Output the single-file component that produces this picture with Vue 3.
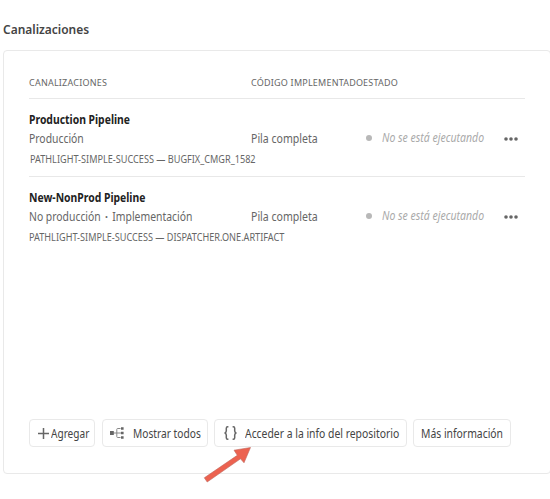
<script setup>
const pipelines = [
  {
    name: 'Production Pipeline',
    type: ['Producción'],
    source: 'PATHLIGHT-SIMPLE-SUCCESS — BUGFIX_CMGR_1582',
    code: 'Pila completa',
    status: 'No se está ejecutando',
    key: 'production',
  },
  {
    name: 'New-NonProd Pipeline',
    type: ['No producción', 'Implementación'],
    source: 'PATHLIGHT-SIMPLE-SUCCESS — DISPATCHER.ONE.ARTIFACT',
    code: 'Pila completa',
    status: 'No se está ejecutando',
    key: 'nonprod',
  },
]
</script>

<template>
  <main class="page">
    <h1 class="title">Canalizaciones</h1>
    <section class="card">
      <div class="head">
        <span class="head-name">Canalizaciones</span>
        <span class="head-code">Código implementado</span>
        <span class="head-status">Estado</span>
      </div>
      <article v-for="p in pipelines" :key="p.key" class="row" :class="p.key">
        <div class="info">
          <h2 class="name">{{ p.name }}</h2>
          <p class="type"><template v-for="(t, i) in p.type" :key="t"><b v-if="i" class="sep">·</b>{{ t }}</template></p>
          <p class="source">{{ p.source }}</p>
        </div>
        <span class="code">{{ p.code }}</span>
        <div class="status"><i class="dot"></i><em>{{ p.status }}</em></div>
        <svg class="more" width="14" height="4" viewBox="0 0 14 4">
          <circle cx="2" cy="2" r="1.8" /><circle cx="7" cy="2" r="1.8" /><circle cx="12" cy="2" r="1.8" />
        </svg>
      </article>
      <footer class="actions">
        <button class="btn add">
          <svg width="11" height="11" viewBox="0 0 11 11"><path d="M5.5 0v11M0 5.5h11" stroke="#666" stroke-width="1.5" /></svg>
          <span>Agregar</span>
        </button>
        <button class="btn all">
          <svg width="15" height="12" viewBox="0 0 15 12">
            <path d="M3 6h8M10.5 1.5H7.6Q6.8 1.5 6.8 2.3V9.7Q6.8 10.5 7.6 10.5H10.5" fill="none" stroke="#888" />
            <path d="M0 4h3.8v4H0zM11 .2h2.6v2.6H11zM11 4.7h2.6v2.6H11zM11 9.2h2.6v2.6H11z" fill="#666" />
          </svg>
          <span>Mostrar todos</span>
        </button>
        <button class="btn repo">
          <svg width="13" height="14" viewBox="0 0 13 14">
            <path d="M4.4.8H3.7Q2.3.8 2.3 2.3V5Q2.3 6.7.6 7 2.3 7.3 2.3 9v2.7q0 1.5 1.4 1.5h.7M8.6.8h.7q1.4 0 1.4 1.5V5q0 1.7 1.7 2-1.7.3-1.7 2v2.7q0 1.5-1.4 1.5h-.7" fill="none" stroke="#666" stroke-width="1.5" />
          </svg>
          <span>Acceder a la info del repositorio</span>
        </button>
        <button class="btn info-btn"><span>Más información</span></button>
      </footer>
    </section>
    <svg class="arrow" width="50" height="38" viewBox="0 0 50 38">
      <path d="M1.3 31.8 34.3 9.3 31 4.2 47.5 1.5 41 16.8 37.5 12.8 4.2 36Z" fill="#ec6250" stroke="#bd685e" stroke-width=".6" />
    </svg>
  </main>
</template>

<style>
body {
  background: #fff;
}
</style>

<style scoped>
.page {
  position: relative;
  box-sizing: border-box;
  width: 550px;
  height: 499px;
  padding: 20px 0 0 3px;
  overflow: hidden;
  font-family: "Noto Sans", "Open Sans", sans-serif;
  color: #666;
  white-space: nowrap;
}
/* Narrowed letterforms */
.title,
.name,
.type,
.source,
.code,
.status em,
.btn span {
  display: block;
  width: max-content;
  transform: scaleX(0.865);
  transform-origin: 0 50%;
}
.title {
  margin: 0;
  height: 18px;
  line-height: 18px;
  font-size: 13px;
  font-weight: 600;
  color: #444;
  transform: scaleX(0.92);
}
.card {
  box-sizing: border-box;
  width: 548px;
  height: 424px;
  margin-top: 12px;
  padding: 24px 25px 0;
  border: 1px solid #e9e9e9;
  border-radius: 4px;
  display: flex;
  flex-direction: column;
}
.head {
  box-sizing: border-box;
  height: 24px;
  width: 496px;
  padding-top: 1px;
  display: flex;
  border-bottom: 1px solid #e8e8e8;
  font-size: 9px;
  line-height: 14px;
  text-transform: uppercase;
  letter-spacing: 0.22px;
}
.head-name {
  width: 222px;
}
.head-code {
  width: 112px;
}
.row {
  box-sizing: border-box;
  width: 496px;
  height: 78px;
  display: grid;
  grid-template-columns: 222px 115px 138px 1fr;
  align-items: start;
  font-size: 12px;
}
.production {
  border-bottom: 1px solid #e8e8e8;
}
.info {
  padding-top: 12px;
}
.name,
.type,
.source {
  margin: 0;
}
.name {
  font-size: 12px;
  line-height: 18px;
  font-weight: 700;
  color: #222;
}
.type {
  line-height: 20px;
}
.sep {
  margin: 0 5px;
}
.source {
  font-size: 10px;
  line-height: 20px;
  transform: scaleX(0.913);
}
.production .source {
  margin-left: 1px;
}
.code {
  padding-top: 30px;
  line-height: 20px;
  transform: scaleX(0.88);
}
.status {
  padding-top: 29px;
  display: flex;
  align-items: center;
  line-height: 20px;
  color: #aaa;
}
.status em {
  transform: scaleX(0.875);
}
.dot {
  width: 6px;
  height: 6px;
  margin-right: 10px;
  border-radius: 50%;
  background: #b8b8b8;
}
.more {
  margin-top: 38px;
  fill: #666;
}
.actions {
  display: flex;
  margin-top: auto;
  margin-bottom: 26px;
}
.btn {
  box-sizing: border-box;
  height: 28px;
  padding: 0;
  display: flex;
  align-items: center;
  border: 1px solid #e9e9e9;
  border-radius: 4px;
  background: #fff;
  font: inherit;
  font-size: 12px;
  color: #444;
}
.btn svg {
  flex: none;
}
.add {
  width: 66px;
  padding-left: 8px;
  margin-right: 7px;
}
.add span {
  margin-left: 2px;
  transform: scaleX(0.84);
}
.all {
  width: 106px;
  padding-left: 7px;
  margin-right: 6px;
}
.all span {
  margin-left: 8px;
  transform: scaleX(0.85);
}
.repo {
  width: 193px;
  padding-left: 9px;
  margin-right: 6px;
}
.repo span {
  margin-left: 8px;
}
.info-btn {
  width: 98px;
  padding-left: 7px;
}
.arrow {
  position: absolute;
  left: 203px;
  top: 446px;
}
</style>
